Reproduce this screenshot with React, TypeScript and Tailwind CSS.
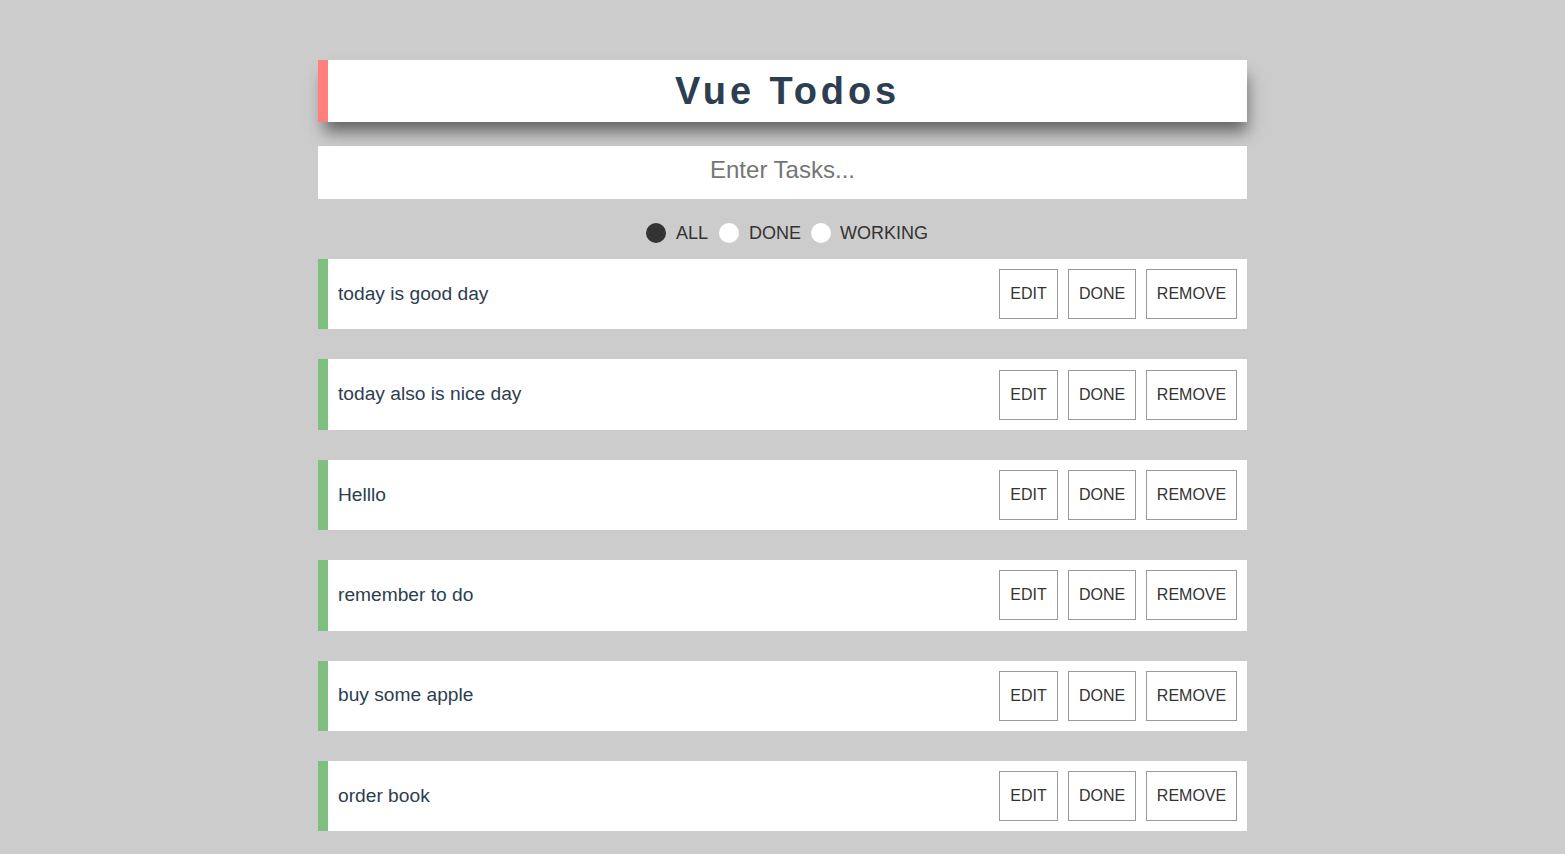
import React from "react";

const todos = [
  "today is good day",
  "today also is nice day",
  "Helllo",
  "remember to do",
  "buy some apple",
  "order book",
];

export default function App() {
  return (
    <div
      className="min-h-[854px] w-full bg-[#cccccc] pt-[60px]"
      style={{ fontFamily: '"Liberation Sans", Arial, sans-serif' }}
    >
      <div className="mx-auto w-[929px]">
        <div className="flex h-[62px] items-center justify-center border-l-[10px] border-[#ff7f7f] bg-white shadow-[3px_13px_15px_-3px_rgba(0,0,0,0.5)]">
          <h1 className="text-[38px] font-bold tracking-[3.9px] text-[#2c3e50]">Vue Todos</h1>
        </div>
        <input
          className="mt-[24px] block h-[53px] w-full bg-white pb-[6px] text-center text-[24px] text-[#333] outline-none placeholder:text-[#757575]"
          placeholder="Enter Tasks..."
        />
        <div className="flex h-[60px] items-center justify-center pl-[9px] pt-[8px] text-[18px] text-[#333]">
          <span className="h-[20px] w-[20px] rounded-full bg-[#333]" />
          <span className="ml-[10px]">ALL</span>
          <span className="ml-[11px] h-[20px] w-[20px] rounded-full bg-white" />
          <span className="ml-[10px]">DONE</span>
          <span className="ml-[10px] h-[20px] w-[20px] rounded-full bg-white" />
          <span className="ml-[9px]">WORKING</span>
        </div>
        <div className="flex flex-col gap-[30px]">
          {todos.map((t) => (
            <div
              key={t}
              className="flex h-[70.4px] items-center border-l-[10px] border-[#7fbf7f] bg-white pl-[10px] pr-[10px]"
            >
              <span className="flex-1 text-[19.2px] text-[#2c3e50]">{t}</span>
              <div className="flex gap-[10px] text-[16px] text-[#333]">
                <button className="h-[50px] w-[59px] border border-[#999] bg-white">EDIT</button>
                <button className="h-[50px] w-[68px] border border-[#999] bg-white">DONE</button>
                <button className="h-[50px] w-[91px] border border-[#999] bg-white">REMOVE</button>
              </div>
            </div>
          ))}
        </div>
      </div>
    </div>
  );
}
